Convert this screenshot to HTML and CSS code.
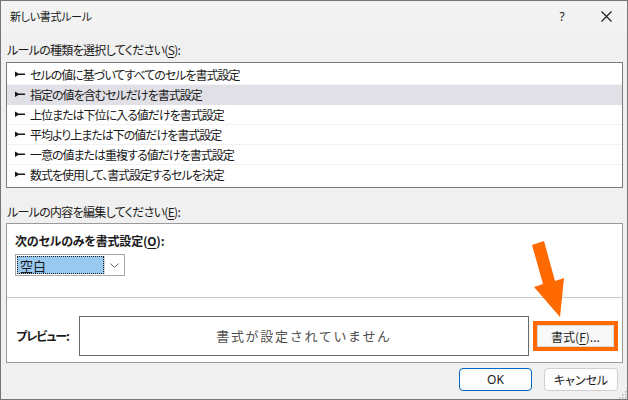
FILE: index.html
```html
<!DOCTYPE html>
<html lang="ja">
<head>
<meta charset="utf-8">
<title>新しい書式ルール</title>
<link rel="stylesheet" href="styles.css">
</head>
<body>
<div class="window">
  <div class="titlebar">
    <span class="title">新しい書式ルール</span>
    <span class="help">?</span>
    <span class="close"><svg width="11" height="11" viewBox="0 0 11 11"><path d="M0.5 0.5L10.5 10.5M10.5 0.5L0.5 10.5" stroke="#1a1a1a" stroke-width="1.1" fill="none"/></svg></span>
  </div>
  <div class="content">
    <div class="label label-top">ルールの種類を選択してください(<u>S</u>):</div>
    <div class="listbox">
      <div class="row"><svg class="bullet" width="10" height="7" viewBox="0 0 10 7"><polygon points="0,0.5 3.5,2.6 10,2.6 10,4 3.5,4 0,6" fill="#1a1a1a"/></svg>セルの値に基づいてすべてのセルを書式設定</div>
      <div class="row selected"><svg class="bullet" width="10" height="7" viewBox="0 0 10 7"><polygon points="0,0.5 3.5,2.6 10,2.6 10,4 3.5,4 0,6" fill="#1a1a1a"/></svg>指定の値を含むセルだけを書式設定</div>
      <div class="row"><svg class="bullet" width="10" height="7" viewBox="0 0 10 7"><polygon points="0,0.5 3.5,2.6 10,2.6 10,4 3.5,4 0,6" fill="#1a1a1a"/></svg>上位または下位に入る値だけを書式設定</div>
      <div class="row"><svg class="bullet" width="10" height="7" viewBox="0 0 10 7"><polygon points="0,0.5 3.5,2.6 10,2.6 10,4 3.5,4 0,6" fill="#1a1a1a"/></svg>平均より上または下の値だけを書式設定</div>
      <div class="row"><svg class="bullet" width="10" height="7" viewBox="0 0 10 7"><polygon points="0,0.5 3.5,2.6 10,2.6 10,4 3.5,4 0,6" fill="#1a1a1a"/></svg>一意の値または重複する値だけを書式設定</div>
      <div class="row last"><svg class="bullet" width="10" height="7" viewBox="0 0 10 7"><polygon points="0,0.5 3.5,2.6 10,2.6 10,4 3.5,4 0,6" fill="#1a1a1a"/></svg>数式を使用して、書式設定するセルを決定</div>
    </div>
    <div class="label label-edit">ルールの内容を編集してください(<u>E</u>):</div>
    <div class="editbox">
      <div class="edit-top">
        <div class="heading">次のセルのみを書式設定(<u>O</u>):</div>
        <div class="combo">
          <div class="combo-value"><span>空白</span></div>
          <div class="combo-btn"><svg width="9" height="5" viewBox="0 0 9 5"><path d="M0.5 0.5L4.5 4.5L8.5 0.5" stroke="#606060" stroke-width="1" fill="none"/></svg></div>
        </div>
      </div>
      <div class="edit-bottom">
        <div class="preview-label">プレビュー:</div>
        <div class="preview">書式が設定されていません</div>
        <div class="highlight">
          <div class="btn format-btn">書式(<u>F</u>)...</div>
        </div>
      </div>
    </div>
    <div class="buttons">
      <div class="btn ok">OK</div>
      <div class="btn cancel">キャンセル</div>
    </div>
  </div>
  <svg class="grip" width="8" height="8" viewBox="0 0 8 8"><g fill="#b0b0b0"><rect x="6" y="0" width="1.5" height="1.5"/><rect x="3" y="3" width="1.5" height="1.5"/><rect x="6" y="3" width="1.5" height="1.5"/><rect x="0" y="6" width="1.5" height="1.5"/><rect x="3" y="6" width="1.5" height="1.5"/><rect x="6" y="6" width="1.5" height="1.5"/></g></svg>
  <svg class="callout" width="40" height="82" viewBox="0 0 40 82"><polygon points="4,7 16,3 27,43 36,40 32,79 6,49 15,46" fill="#ff6a00"/></svg>
</div>
</body>
</html>
```
FILE: styles.css
```css
* { box-sizing: border-box; }
html, body { margin: 0; padding: 0; }
body {
  width: 628px;
  height: 400px;
  font-family: "Noto Sans CJK JP", "Noto Sans", sans-serif;
  font-feature-settings: "palt";
  font-size: 12px;
  color: #1a1a1a;
  background: #f0f0f0;
}
u { text-decoration: underline; text-underline-offset: 2px; }
.window {
  position: relative;
  width: 628px;
  height: 400px;
  border: 1px solid #767676;
  background: #f0f0f0;
  display: flex;
  flex-direction: column;
}
.titlebar {
  height: 30px;
  flex: none;
  background: #f3f3f3;
  display: flex;
  align-items: center;
  padding-left: 9px;
}
.title { flex: 1; font-size: 11px; letter-spacing: -0.3px; }
.help { width: 14px; text-align: center; font-family: "Noto Sans", sans-serif; font-size: 12px; margin-right: 32px; }
.close { width: 11px; height: 11px; margin-right: 15px; display: flex; }
.content {
  flex: 1;
  display: flex;
  flex-direction: column;
  padding: 0 4px 0 5px;
}
.label { height: 16px; line-height: 16px; padding-left: 1px; letter-spacing: -0.7px; }
.label-top { margin-top: 11px; }
.label-edit { margin-top: 16px; }
.listbox {
  margin-top: 4px;
  height: 126px;
  border: 1px solid #7a7a7a;
  background: #fff;
  padding: 2px 0 2px;
}
.row {
  height: 20px;
  line-height: 19px;
  padding-left: 8px;
  display: flex;
  align-items: center;
  border-bottom: 1px solid #f2f2f2;
  white-space: nowrap;
  letter-spacing: -1px;
}
.row.selected { background: #e0e0e6; border-bottom-color: #e0e0e6; }
.row.last { border-bottom-color: transparent; }
.bullet { flex: none; margin-right: 5px; }
.editbox {
  margin-top: 3px;
  height: 140px;
  border: 1px solid #9a9a9a;
  background: #fff;
  display: flex;
  flex-direction: column;
}
.edit-top {
  height: 74px;
  border-bottom: 1px solid #c8c8c8;
  padding: 9px 0 0 8px;
}
.heading { font-weight: bold; height: 16px; line-height: 16px; letter-spacing: -0.2px; }
.combo {
  margin-top: 5px;
  width: 110px;
  height: 22px;
  border: 1px solid #a6a6a6;
  display: flex;
  padding: 1px;
  background: #fff;
}
.combo-value {
  width: 87px;
  background: #99c9ef;
  outline: 1px dotted #1a1a1a;
  outline-offset: -1px;
  display: flex;
  align-items: center;
  padding-left: 3px;
  font-size: 13px;
}
.combo-btn {
  flex: 1;
  border-left: 1px solid #d6d6d6;
  display: flex;
  align-items: center;
  justify-content: center;
}
.edit-bottom {
  flex: 1;
  display: flex;
  align-items: center;
  padding: 11px 0 0 9px;
}
.preview-label { font-weight: bold; width: 63px; flex: none; letter-spacing: -1px; }
.preview {
  width: 450px;
  height: 40px;
  border: 1px solid #6a6a6a;
  display: flex;
  align-items: center;
  justify-content: center;
  color: #505050;
  font-size: 13px;
  font-feature-settings: normal;
  letter-spacing: 1.7px;
}
.highlight {
  margin-left: 4px;
  margin-top: 1px;
  border: 4px solid #ff6a00;
  width: 85px;
  height: 30px;
}
.btn {
  display: flex;
  align-items: center;
  justify-content: center;
  background: #fdfdfd;
  border: 1px solid #d0d0d0;
  border-radius: 3px;
}
.format-btn {
  height: 22px;
  border-radius: 0;
  border-color: #d8d8d8;
  background: #f8f8f8;
}
.buttons {
  margin-top: 5px;
  display: flex;
  justify-content: flex-end;
  gap: 12px;
  padding-right: 5px;
}
.ok {
  width: 73px;
  height: 23px;
  border: 1px solid #0067c0;
  border-radius: 4px;
  background: #fdfdfd;
  font-family: "Noto Sans", sans-serif;
}
.cancel {
  width: 74px;
  height: 23px;
  border-radius: 4px;
}
.grip { position: absolute; right: 0; bottom: 0; }
.callout { position: absolute; left: 527px; top: 237px; pointer-events: none; }
```
